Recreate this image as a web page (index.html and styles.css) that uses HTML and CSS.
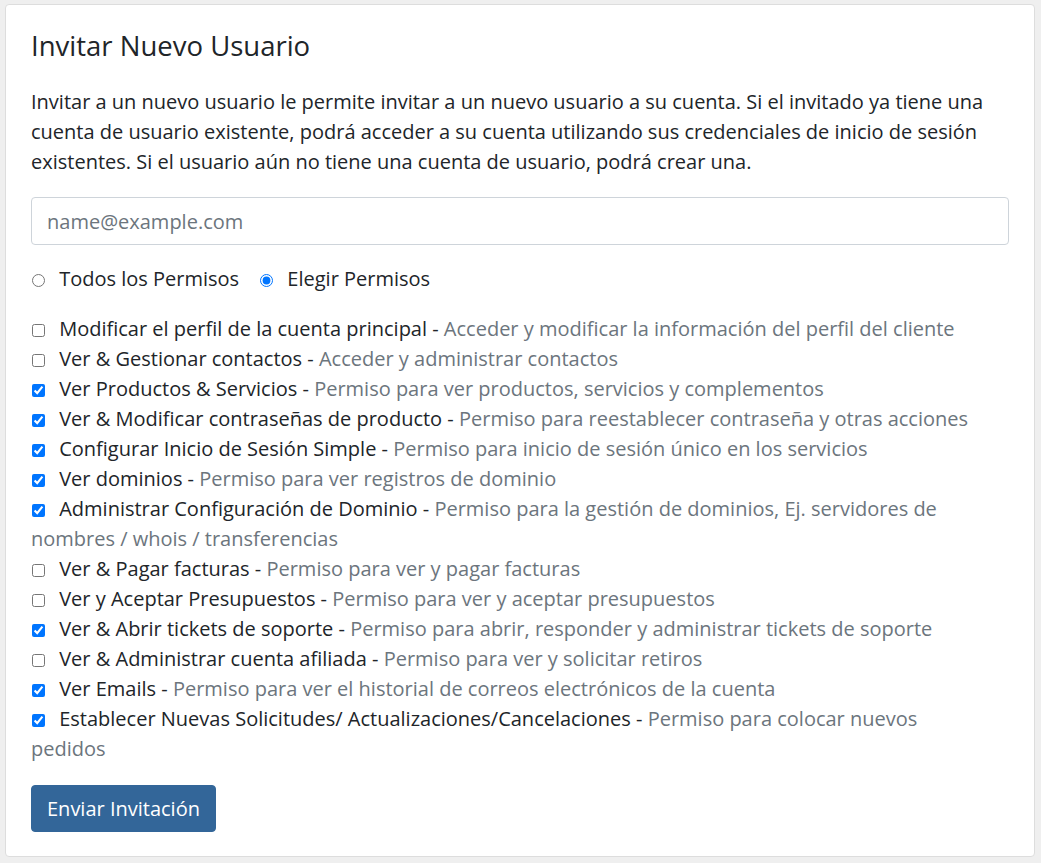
FILE: index.html
```html
<!DOCTYPE html>
<html lang="es">

<head>
    <meta charset="UTF-8" />
    <meta name="viewport" content="width=device-width, initial-scale=1.0" />
    <title>Invitar Nuevo Usuario</title>
    <link rel="stylesheet" href="styles.css">
</head>

<body>
    <div class="card">
        <h2 class="card-title">Invitar Nuevo Usuario</h2>

        <p class="intro">Invitar a un nuevo usuario le permite invitar a un nuevo usuario a su cuenta. Si el invitado ya tiene una cuenta de usuario existente, podrá acceder a su cuenta utilizando sus credenciales de inicio de sesión existentes. Si el usuario aún no tiene una cuenta de usuario, podrá crear una.</p>

        <form id="inviteForm">
            <input class="form-control" type="email" placeholder="name@example.com" />

            <div class="radio-row">
                <label><input type="radio" name="perms" value="all" /> Todos los Permisos</label>
                <label><input type="radio" name="perms" value="choose" checked /> Elegir Permisos</label>
            </div>

            <div class="perm-list">
                <label><input type="checkbox" /> Modificar el perfil de la cuenta principal - <span class="muted">Acceder y modificar la información del perfil del cliente</span></label>
                <label><input type="checkbox" /> Ver &amp; Gestionar contactos - <span class="muted">Acceder y administrar contactos</span></label>
                <label><input type="checkbox" checked /> Ver Productos &amp; Servicios - <span class="muted">Permiso para ver productos, servicios y complementos</span></label>
                <label><input type="checkbox" checked /> Ver &amp; Modificar contraseñas de producto - <span class="muted">Permiso para reestablecer contraseña y otras acciones</span></label>
                <label><input type="checkbox" checked /> Configurar Inicio de Sesión Simple - <span class="muted">Permiso para inicio de sesión único en los servicios</span></label>
                <label><input type="checkbox" checked /> Ver dominios - <span class="muted">Permiso para ver registros de dominio</span></label>
                <label><input type="checkbox" checked /> Administrar Configuración de Dominio - <span class="muted">Permiso para la gestión de dominios, Ej. servidores de nombres / whois / transferencias</span></label>
                <label><input type="checkbox" /> Ver &amp; Pagar facturas - <span class="muted">Permiso para ver y pagar facturas</span></label>
                <label><input type="checkbox" /> Ver y Aceptar Presupuestos - <span class="muted">Permiso para ver y aceptar presupuestos</span></label>
                <label><input type="checkbox" checked /> Ver &amp; Abrir tickets de soporte - <span class="muted">Permiso para abrir, responder y administrar tickets de soporte</span></label>
                <label><input type="checkbox" /> Ver &amp; Administrar cuenta afiliada - <span class="muted">Permiso para ver y solicitar retiros</span></label>
                <label><input type="checkbox" checked /> Ver Emails - <span class="muted">Permiso para ver el historial de correos electrónicos de la cuenta</span></label>
                <label><input type="checkbox" checked /> Establecer Nuevas Solicitudes/ Actualizaciones/Cancelaciones - <span class="muted">Permiso para colocar nuevos pedidos</span></label>
            </div>

            <button class="btn btn-primary" type="submit">Enviar Invitación</button>
        </form>
    </div>
</body>

</html>
```

FILE: styles.css
```css
* {
    box-sizing: border-box;
}

body {
    margin: 0;
    padding: 4px 6px 6px 5px;
    background: #efefef;
    font-family: 'Open Sans', 'Noto Sans', sans-serif;
    font-size: 20px;
    line-height: 30px;
    color: #212529;
}

.card {
    background: #fff;
    border: 1px solid #dddddd;
    border-radius: 4px;
    padding: 24px 25px 24px 25px;
}

.card-title {
    margin: 0 0 25px 0;
    font-size: 27.5px;
    font-weight: 400;
    line-height: 1.2;
}

.intro {
    margin: 0 0 20px 0;
}

.form-control {
    display: block;
    width: 100%;
    height: 48px;
    padding: 6px 15px;
    border: 1px solid #ced4da;
    border-radius: 4px;
    font-family: inherit;
    font-size: 20px;
    color: #495057;
}

.form-control::placeholder {
    color: #6c757d;
}

.radio-row {
    margin: 19px 0 20px 0;
    display: flex;
    gap: 20px;
}

.radio-row input,
.perm-list input {
    width: 13px;
    height: 13px;
    margin: 0 9px 0 1px;
    vertical-align: -1px;
}

.perm-list {
    margin-bottom: 21px;
    padding-right: 30px;
}

.perm-list label {
    display: block;
}

.muted {
    color: #6c757d;
}

.btn {
    display: inline-block;
    padding: 8px 15px;
    border: 1px solid transparent;
    border-radius: 4px;
    font-family: inherit;
    font-size: 20px;
    line-height: 29px;
    cursor: pointer;
}

.btn-primary {
    background: #336699;
    border-color: #336699;
    color: #fff;
}
```
